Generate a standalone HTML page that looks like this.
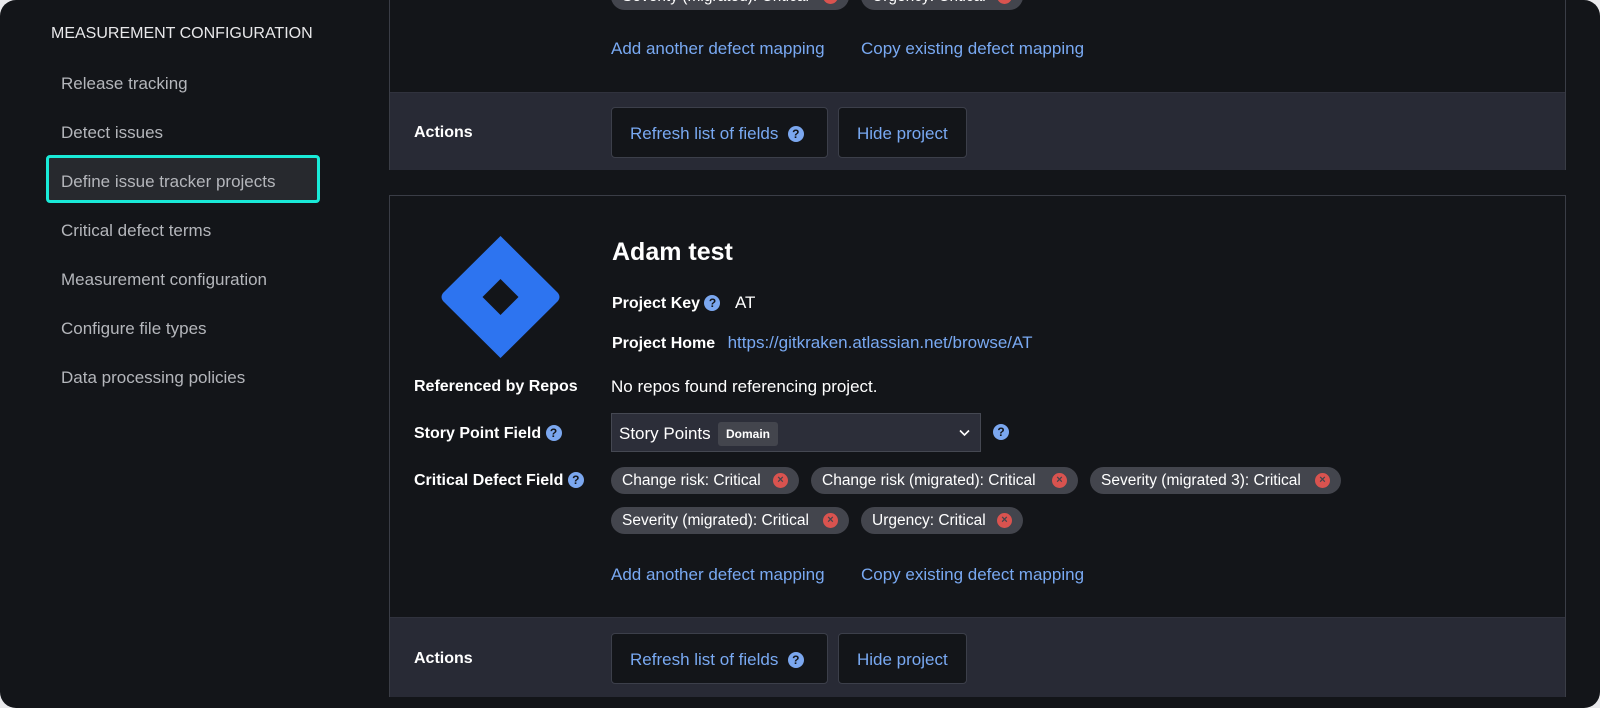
<!DOCTYPE html>
<html><head><meta charset="utf-8"><style>
*{box-sizing:border-box;margin:0;padding:0}
body{width:1600px;height:708px;background:#e9e9ec;font-family:"Liberation Sans",Arial,sans-serif;overflow:hidden;position:relative}
.frame{position:absolute;left:0;top:0;width:1600px;height:708px;background:#131519;border-radius:16px;overflow:hidden}
.a{position:absolute;white-space:nowrap}
.side{color:#b4b6bb;font-size:17px;left:61px}
.card{position:absolute;left:389px;width:1177px;border:1px solid #3a3d46;background:#131519}
.act{position:absolute;left:0;right:0;background:#282a35;border-top:1px solid #30323d}
.lbl{color:#fff;font-weight:bold;font-size:16px}
.btn{position:absolute;height:51px;border:1px solid #3c3f4a;border-radius:4px;background:#131519;color:#79a9f2;font-size:17px;line-height:51px;padding-left:18px}
.link{color:#79a9f2;font-size:17px}
.q{display:inline-block;width:16px;height:16px;border-radius:50%;background:#7ba7ef;color:#131519;font-size:12px;font-weight:bold;text-align:center;line-height:16px;vertical-align:1px}
.chip{position:absolute;height:27px;border-radius:14px;background:#43454d;color:#fff;font-size:15.5px;line-height:28px;padding-left:11px}
.x{position:absolute;right:11px;top:6px;width:15px;height:15px;border-radius:50%;background:#d9534f;color:#43454d;font-size:11px;font-weight:bold;text-align:center;line-height:15px}
</style></head><body><div class="frame">
<div class="a" style="left:51px;top:25px;color:#e8e8ea;font-size:16px">MEASUREMENT CONFIGURATION</div>
<div style="position:absolute;left:46px;top:155px;width:274px;height:48px;border:3px solid #19ead8;border-radius:4px;background:#27292e"></div>
<div class="a side" style="top:74px">Release tracking</div>
<div class="a side" style="top:123px">Detect issues</div>
<div class="a side" style="top:172px">Define issue tracker projects</div>
<div class="a side" style="top:221px">Critical defect terms</div>
<div class="a side" style="top:270px">Measurement configuration</div>
<div class="a side" style="top:319px">Configure file types</div>
<div class="a side" style="top:368px">Data processing policies</div>

<div class="card" style="top:-20px;height:190px">
 <div class="chip" style="left:221px;top:2px;width:238px">Severity (migrated): Critical<span class="x">×</span></div>
 <div class="chip" style="left:471px;top:2px;width:162px">Urgency: Critical<span class="x">×</span></div>
 <div class="a link" style="left:221px;top:58px">Add another defect mapping</div>
 <div class="a link" style="left:471px;top:58px">Copy existing defect mapping</div>
 <div class="act" style="top:111px;height:78px">
  <div class="a lbl" style="left:24px;top:31px">Actions</div>
  <div class="btn" style="left:221px;top:14px;width:217px">Refresh list of fields &nbsp;<span class="q">?</span></div>
  <div class="btn" style="left:448px;top:14px;width:129px">Hide project</div>
 </div>
</div>

<div class="card" style="top:195px;height:502px">
 <svg style="position:absolute;left:50px;top:39px" width="121" height="124" viewBox="0 0 121 124"><path d="M60.5 1 L118 58 Q121 62 118 66 L60.5 123 L3 66 Q0 62 3 58 Z M60.5 44 L42.5 62 L60.5 80 L78.5 62 Z" fill="#2d74f0" fill-rule="evenodd"/></svg>
 <div class="a" style="left:222px;top:42px;color:#fff;font-size:25px;font-weight:bold">Adam test</div>
 <div class="a lbl" style="left:222px;top:97px">Project Key <span class="q">?</span> <span style="font-weight:normal;margin-left:10px;font-size:17px">AT</span></div>
 <div class="a lbl" style="left:222px;top:137px">Project Home <span class="link" style="font-weight:normal;margin-left:8px">https://gitkraken.atlassian.net/browse/AT</span></div>
 <div class="a lbl" style="left:24px;top:182px">Referenced by Repos</div>
 <div class="a" style="left:221px;top:181px;color:#fff;font-size:17px">No repos found referencing project.</div>
 <div class="a lbl" style="left:24px;top:229px">Story Point Field <span class="q">?</span></div>
 <div style="position:absolute;left:221px;top:217px;width:370px;height:39px;background:#2c2e39;border:1px solid #454852">
  <span class="a" style="left:7px;top:10px;color:#fff;font-size:17px">Story Points</span>
  <span class="a" style="left:106px;top:8px;background:#43454d;color:#fff;font-size:12px;font-weight:bold;padding:5px 8px;border-radius:3px">Domain</span>
  <svg style="position:absolute;right:10px;top:15px" width="11" height="8"><path d="M1 1.5 L5.5 6 L10 1.5" stroke="#fff" stroke-width="1.6" fill="none"/></svg>
 </div>
 <div class="a" style="left:603px;top:228px"><span class="q">?</span></div>
 <div class="a lbl" style="left:24px;top:276px">Critical Defect Field <span class="q">?</span></div>
 <div class="chip" style="left:221px;top:271px;width:188px">Change risk: Critical<span class="x">×</span></div>
 <div class="chip" style="left:421px;top:271px;width:267px">Change risk (migrated): Critical<span class="x">×</span></div>
 <div class="chip" style="left:700px;top:271px;width:251px">Severity (migrated 3): Critical<span class="x">×</span></div>
 <div class="chip" style="left:221px;top:311px;width:238px">Severity (migrated): Critical<span class="x">×</span></div>
 <div class="chip" style="left:471px;top:311px;width:162px">Urgency: Critical<span class="x">×</span></div>
 <div class="a link" style="left:221px;top:369px">Add another defect mapping</div>
 <div class="a link" style="left:471px;top:369px">Copy existing defect mapping</div>
 <div class="act" style="top:421px;height:80px">
  <div class="a lbl" style="left:24px;top:32px">Actions</div>
  <div class="btn" style="left:221px;top:15px;width:217px">Refresh list of fields &nbsp;<span class="q">?</span></div>
  <div class="btn" style="left:448px;top:15px;width:129px">Hide project</div>
 </div>
</div>
</div></body></html>
